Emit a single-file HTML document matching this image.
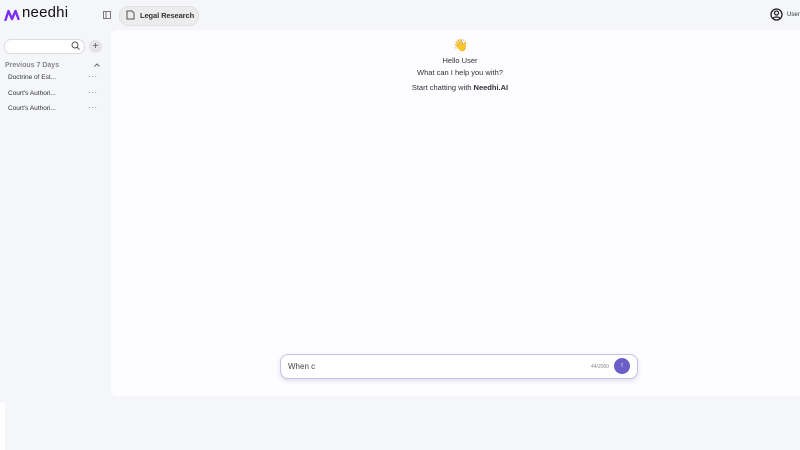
<!DOCTYPE html>
<html><head><style>
body{margin:0;width:800px;height:450px;background:#f5f6f9;font-family:"Liberation Sans",sans-serif;position:relative;overflow:hidden;color:#222}
.abs{position:absolute}
.dots{position:absolute;left:88px;font-size:8px;color:#777;letter-spacing:0.5px}
</style></head><body>
<div class="abs" style="left:0;top:403px;width:5px;height:47px;background:#fff"></div>
<svg class="abs" style="left:4px;top:9px" width="16" height="12" viewBox="0 0 16 12"><path d="M1.5 11 L4.5 2 L8 10 L11.5 2 L14.5 10" fill="none" stroke="#7b2ff2" stroke-width="2.4" stroke-linecap="round" stroke-linejoin="round"/></svg>
<div class="abs" style="left:22px;top:4px;font-size:15px;color:#111;letter-spacing:0.2px">needhi</div>
<svg class="abs" style="left:103px;top:11px" width="8" height="8"><rect x="0.5" y="0.5" width="7" height="7" fill="none" stroke="#777"/><line x1="3" y1="0" x2="3" y2="8" stroke="#777"/></svg>
<div class="abs" style="left:119px;top:6px;width:78px;height:18px;border-radius:9px;background:#ececec;border:1px solid #e2e2e2"></div>
<svg class="abs" style="left:126px;top:10px" width="9" height="10"><path d="M1 1h5l2 2v6H1z" fill="none" stroke="#555"/></svg>
<div class="abs" style="left:140px;top:11px;font-size:7.5px;font-weight:bold;color:#333;letter-spacing:-0.1px">Legal Research</div>
<svg class="abs" style="left:770px;top:8px" width="13" height="13"><circle cx="6.5" cy="6.5" r="5.5" fill="none" stroke="#222" stroke-width="1.3"/><circle cx="6.5" cy="5" r="2" fill="none" stroke="#222" stroke-width="1.2"/><path d="M3 10.5c1-2 6-2 7 0" fill="none" stroke="#222" stroke-width="1.2"/></svg>
<div class="abs" style="left:787px;top:12px;font-size:6px;color:#333">User</div>
<div class="abs" style="left:4px;top:39px;width:79px;height:13px;border-radius:7px;background:#fff;border:1px solid #ddd"></div>
<svg class="abs" style="left:71px;top:41px" width="9" height="9"><circle cx="4" cy="4" r="3" fill="none" stroke="#555"/><line x1="6" y1="6" x2="8.5" y2="8.5" stroke="#555"/></svg>
<div class="abs" style="left:89px;top:40px;width:13px;height:13px;border-radius:50%;background:#e3e3e8;text-align:center;font-size:10px;line-height:13px;color:#555">+</div>
<div class="abs" style="left:5px;top:62px;font-size:7px;color:#888;font-weight:bold">Previous 7 Days</div>
<svg class="abs" style="left:94px;top:63px" width="6" height="4"><path d="M0.5 3.5L3 1l2.5 2.5" fill="none" stroke="#666"/></svg>
<div class="abs" style="left:8px;top:74px;font-size:6.5px;color:#333">Doctrine of Est...</div>
<div class="abs" style="left:8px;top:90px;font-size:6.5px;color:#333">Court's Authori...</div>
<div class="abs" style="left:8px;top:105px;font-size:6.5px;color:#333">Court's Authori...</div>
<div class="dots" style="top:72px">···</div>
<div class="dots" style="top:88px">···</div>
<div class="dots" style="top:103px">···</div>
<div class="abs" style="left:111px;top:30px;width:689px;height:366px;background:#fdfcff;border-radius:6px 0 0 6px"></div>
<div class="abs" style="left:453px;top:38px;font-size:12px;color:#f0b429">👋</div>
<div class="abs" style="left:0;width:920px;top:56px;text-align:center;font-size:7.5px;color:#333">Hello User</div>
<div class="abs" style="left:0;width:920px;top:68px;text-align:center;font-size:7.5px;color:#333">What can I help you with?</div>
<div class="abs" style="left:0;width:920px;top:83px;text-align:center;font-size:7.5px;color:#333">Start chatting with <b>Needhi.AI</b></div>
<div class="abs" style="left:280px;top:354px;width:356px;height:23px;border-radius:8px;background:#fff;border:1px solid #c9c0e6;box-shadow:0 2px 5px rgba(120,100,180,0.2)"></div>
<div class="abs" style="left:288px;top:362px;font-size:8px;color:#444">When c</div>
<div class="abs" style="left:591px;top:364px;font-size:5px;color:#888">44/2000</div>
<div class="abs" style="left:614px;top:358px;width:16px;height:16px;border-radius:50%;background:#6b5fc7;color:#fff;text-align:center;font-size:7px;line-height:16px">↑</div>
</body></html>
